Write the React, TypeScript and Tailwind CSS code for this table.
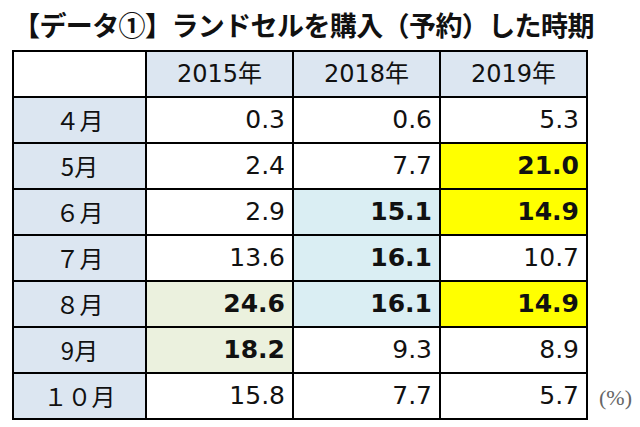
import React from "react";

type Cell = { v: string; bold?: boolean; bg?: string };

const rows: { m: string; cells: Cell[] }[] = [
  { m: "４月", cells: [{ v: "0.3" }, { v: "0.6" }, { v: "5.3" }] },
  { m: "5月", cells: [{ v: "2.4" }, { v: "7.7" }, { v: "21.0", bold: true, bg: "bg-[#ffff00]" }] },
  { m: "６月", cells: [{ v: "2.9" }, { v: "15.1", bold: true, bg: "bg-[#daeef3]" }, { v: "14.9", bold: true, bg: "bg-[#ffff00]" }] },
  { m: "７月", cells: [{ v: "13.6" }, { v: "16.1", bold: true, bg: "bg-[#daeef3]" }, { v: "10.7" }] },
  { m: "８月", cells: [{ v: "24.6", bold: true, bg: "bg-[#ebf1de]" }, { v: "16.1", bold: true, bg: "bg-[#daeef3]" }, { v: "14.9", bold: true, bg: "bg-[#ffff00]" }] },
  { m: "9月", cells: [{ v: "18.2", bold: true, bg: "bg-[#ebf1de]" }, { v: "9.3" }, { v: "8.9" }] },
  { m: "１０月", cells: [{ v: "15.8" }, { v: "7.7" }, { v: "5.7" }] },
];

const years = ["2015年", "2018年", "2019年"];

const App = () => {
  return (
    <div className="w-[640px] h-[427px] bg-white overflow-hidden relative">
      <h1 className="pl-[13px] h-[50px] text-[27px] leading-[50px] font-bold text-[#111] tracking-[-0.6px] font-['Noto_Sans_CJK_JP',sans-serif]">
        【データ①】ランドセルを購入（予約）した時期
      </h1>
      <div className="flex items-end">
        <table className="ml-[12px] border-collapse border-2 border-black text-[#111] font-['DejaVu_Sans','Noto_Sans_CJK_JP',sans-serif] text-[25px]">
          <thead>
            <tr className="h-[46px]">
              <th className="w-[133px] border-2 border-black bg-white"></th>
              {years.map((y) => (
                <th key={y} className="w-[147px] border-2 border-black bg-[#dce6f1] font-normal text-center text-[24px]">
                  {y}
                </th>
              ))}
            </tr>
          </thead>
          <tbody>
            {rows.map((r) => (
              <tr key={r.m} className="h-[46px]">
                <td className="border-2 border-black bg-[#dce6f1] text-center text-[24px] font-['Noto_Sans_CJK_JP',sans-serif]">
                  {r.m}
                </td>
                {r.cells.map((c, i) => (
                  <td
                    key={i}
                    className={`border-2 border-black text-right pr-[7px] ${c.bg ?? "bg-white"} ${c.bold ? "font-bold" : "font-normal"}`}
                  >
                    {c.v}
                  </td>
                ))}
              </tr>
            ))}
          </tbody>
        </table>
        <span className="ml-[11px] mb-[6px] text-[22px] text-[#666] font-['Liberation_Serif',serif]">(%)</span>
      </div>
    </div>
  );
};

export default App;
